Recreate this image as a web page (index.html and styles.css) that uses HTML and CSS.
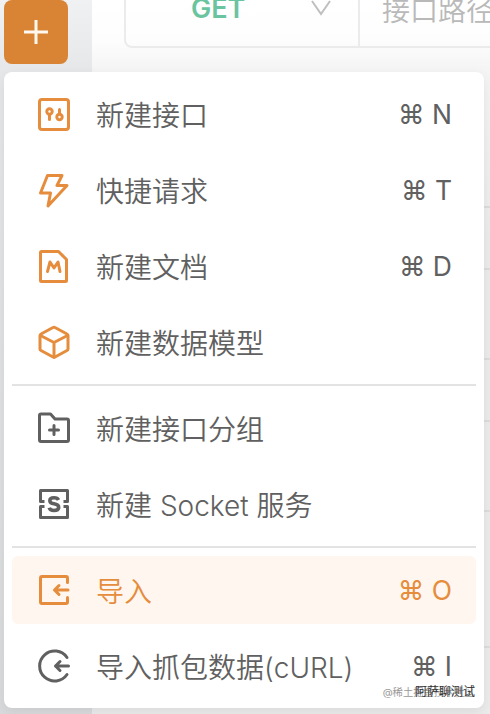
FILE: index.html
```html
<!DOCTYPE html>
<html lang="zh-CN">
<head>
    <meta charset="UTF-8">
    <meta name="viewport" content="width=device-width, initial-scale=1.0">
    <title>新建</title>
    <link rel="stylesheet" href="styles.css">
</head>
<body>
    <div class="page">
        <div class="sidebar">
            <button class="add-btn">
                <svg viewBox="0 0 24 24"><path d="M12 0V24M0 12H24" /></svg>
            </button>
        </div>
        <div class="content">
            <div class="url-bar">
                <div class="method">
                    <span>GET</span>
                    <svg viewBox="0 0 20 16"><path d="M1 1L10 14L19 1" /></svg>
                </div>
                <div class="path">接口路径</div>
            </div>
            <div class="table">
                <div class="row first"></div>
                <div class="row"></div>
                <div class="row tall"></div>
                <div class="row"></div>
                <div class="row tall"></div>
                <div class="row last"></div>
            </div>
        </div>
    </div>

    <div class="menu">
        <div class="item">
            <svg class="icon orange" viewBox="0 0 36 36">
                <rect x="3.5" y="3.5" width="29" height="30" rx="2.5" />
                <circle cx="13.5" cy="15.5" r="2.7" />
                <path d="M13.5 18.5V23.5M23.5 13.5V18" />
                <circle cx="23.5" cy="21" r="2.7" />
            </svg>
            <span class="label">新建接口</span>
            <span class="key">⌘ N</span>
        </div>
        <div class="item">
            <svg class="icon orange" viewBox="0 0 36 36">
                <path d="M11.5 3.5H26L21 13.5H31L12 34L14.5 21H4.5Z" />
            </svg>
            <span class="label">快捷请求</span>
            <span class="key">⌘ T</span>
        </div>
        <div class="item">
            <svg class="icon orange" viewBox="0 0 36 36">
                <path d="M5.500 3.500H22.500L30.500 11.500V32.500Q30.500 33.500 29.500 33.500H5.500Q4.500 33.500 4.500 32.500V4.500Q4.500 3.500 5.500 3.500Z" />
                <path d="M11.500 23.500L14 14L18 20L22 14L24 23.500" />
            </svg>
            <span class="label">新建文档</span>
            <span class="key">⌘ D</span>
        </div>
        <div class="item">
            <svg class="icon orange" viewBox="0 0 36 36">
                <path d="M17 3.500Q18 2.900 19 3.500L31 10Q32 10.500 32 11.500V25Q32 26 31 26.500L19 33Q18 33.600 17 33L5 26.500Q4 26 4 25V11.500Q4 10.500 5 10Z" />
                <path d="M4.500 11.500L18 18.500L31.500 11.500M18 18.500V33" />
            </svg>
            <span class="label">新建数据模型</span>
        </div>
        <div class="divider"></div>
        <div class="item">
            <svg class="icon" viewBox="0 0 36 36">
                <path d="M5 4H14.500L19 9H31Q32.500 9 32.500 10.500V30Q32.500 31.500 31 31.500H5Q3.500 31.500 3.500 30V5.500Q3.500 4 5 4Z" />
                <path d="M13.500 20H22.500M18 15.500V24.500" />
            </svg>
            <span class="label">新建接口分组</span>
        </div>
        <div class="item">
            <svg class="icon socket" viewBox="0 0 36 36">
                <path d="M8.500 15.500H4.500V4.500H31.500V15.500H27.500M8.500 20.500H4.500V31.500H31.500V20.500H27.500" />
                <path class="thick" d="M22.500 14Q21.500 11.800 18 11.800Q13.800 11.800 13.800 14.700Q13.800 17.200 18 17.800Q22.700 18.500 22.700 21.300Q22.700 24.500 18 24.500Q14 24.500 13.200 21.800" />
            </svg>
            <span class="label">新建 Socket 服务</span>
        </div>
        <div class="divider"></div>
        <div class="item active">
            <svg class="icon" viewBox="0 0 36 36">
                <path d="M31.500 10.500V6Q31.500 4.500 30 4.500H6Q4.500 4.500 4.500 6V30Q4.500 31.500 6 31.500H30Q31.500 31.500 31.500 30V25.500" />
                <path d="M32 18H18.500M23 13.500L18.500 18L23 22.500" />
            </svg>
            <span class="label">导入</span>
            <span class="key">⌘ O</span>
        </div>
        <div class="item">
            <svg class="icon" viewBox="0 0 36 36">
                <path d="M31 9.500A15 15 0 1 0 31 26.500" />
                <path d="M32.500 18H19.500M24 13.500L19.500 18L24 22.500" />
            </svg>
            <span class="label">导入抓包数据(cURL)</span>
            <span class="key">⌘ I</span>
        </div>
        <div class="watermark">@稀土掘金技术社区</div>
        <div class="watermark author">阿萨聊测试</div>
    </div>
</body>
</html>
```
FILE: styles.css
```css
* {
    box-sizing: border-box;
}
body {
    margin: 0;
    width: 490px;
    height: 714px;
    overflow: hidden;
    position: relative;
    font-family: Inter, "Noto Sans CJK SC", sans-serif;
    font-size: 28px;
    color: #606060;
}
.page {
    display: flex;
    height: 714px;
}
.sidebar {
    width: 92px;
    flex-shrink: 0;
    padding-left: 4px;
    background: linear-gradient(#f0f1f3, #e6e7e9 72px, #d9dadc);
}
.add-btn {
    width: 64px;
    height: 64px;
    border: none;
    border-radius: 8px;
    background: #d98435;
    display: flex;
    align-items: center;
    justify-content: center;
}
.add-btn svg {
    width: 24px;
    height: 24px;
    flex-shrink: 0;
    fill: none;
    stroke: #fff8ee;
    stroke-width: 3;
}
.content {
    flex: 1;
    min-width: 0;
    padding-left: 32px;
    overflow: hidden;
    background: linear-gradient(#fff, #fdfdfd 40px, #f4f4f4 72px, #ebebeb 240px, #ebebeb);
}
.url-bar {
    display: flex;
    height: 48px;
    width: 400px;
    border: 2px solid #ebebeb;
    border-top: none;
    border-radius: 0 0 8px 8px;
}
.method {
    display: flex;
    width: 234px;
    height: 46px;
    padding: 0 27px 0 65px;
    justify-content: space-between;
    border-right: 2px solid #ebebeb;
    color: #6bc4a0;
    font-weight: 600;
    font-size: 27px;
    line-height: 18px;
}
.method svg {
    width: 20px;
    height: 16px;
    fill: none;
    stroke: #bfbfbf;
    stroke-width: 2;
}
.path {
    padding-left: 22px;
    line-height: 22px;
    font-weight: 350;
    color: #b9b9b9;
    white-space: nowrap;
}
.table {
    padding-top: 96px;
}
.row {
    height: 62px;
    border-bottom: 2px solid #dcdcdc;
}
.row.first {
    height: 64px;
}
.row.tall {
    height: 90px;
}
.row.last {
    height: 136px;
}
.menu {
    position: absolute;
    left: 4px;
    top: 72px;
    width: 480px;
    height: 636px;
    padding: 8px;
    display: flex;
    flex-direction: column;
    gap: 8px;
    background: #fff;
    border-radius: 8px;
    box-shadow: 0 4px 12px rgba(0, 0, 0, 0.07);
}
.item {
    display: flex;
    align-items: center;
    height: 68px;
    padding: 0 24px;
    border-radius: 6px;
}
.item.active {
    background: #fff6ef;
    color: #e58d3c;
}
.icon {
    width: 36px;
    height: 36px;
    margin-right: 24px;
    fill: none;
    stroke: currentColor;
    stroke-width: 3;
    stroke-linejoin: round;
    stroke-linecap: round;
}
.orange {
    color: #e58d3c;
}
.socket {
    stroke-linecap: butt;
}
.thick {
    stroke-width: 3.5;
}
.label {
    flex: 1;
    padding-bottom: 1px;
    font-weight: 350;
    white-space: nowrap;
}
.key {
    font-size: 26.5px;
    font-weight: 400;
    white-space: nowrap;
}
.divider {
    height: 2px;
    flex-shrink: 0;
    background: #e3e3e3;
}
.watermark {
    position: absolute;
    right: 9px;
    bottom: 8px;
    font-size: 10.3px;
    line-height: 16px;
    color: #999;
}
.watermark.author {
    font-size: 12px;
    color: #333;
}
```
